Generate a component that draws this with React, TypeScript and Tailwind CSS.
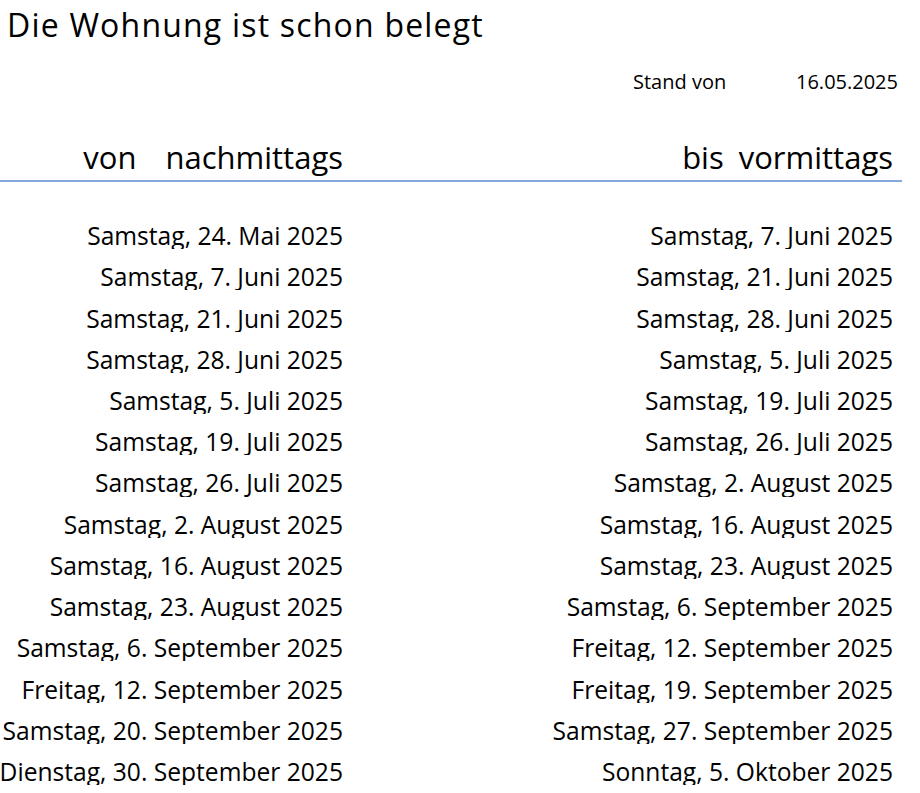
import React from "react";

const left = [
  "Samstag, 24. Mai 2025",
  "Samstag, 7. Juni 2025",
  "Samstag, 21. Juni 2025",
  "Samstag, 28. Juni 2025",
  "Samstag, 5. Juli 2025",
  "Samstag, 19. Juli 2025",
  "Samstag, 26. Juli 2025",
  "Samstag, 2. August 2025",
  "Samstag, 16. August 2025",
  "Samstag, 23. August 2025",
  "Samstag, 6. September 2025",
  "Freitag, 12. September 2025",
  "Samstag, 20. September 2025",
  "Dienstag, 30. September 2025",
];

const right = [
  "Samstag, 7. Juni 2025",
  "Samstag, 21. Juni 2025",
  "Samstag, 28. Juni 2025",
  "Samstag, 5. Juli 2025",
  "Samstag, 19. Juli 2025",
  "Samstag, 26. Juli 2025",
  "Samstag, 2. August 2025",
  "Samstag, 16. August 2025",
  "Samstag, 23. August 2025",
  "Samstag, 6. September 2025",
  "Freitag, 12. September 2025",
  "Freitag, 19. September 2025",
  "Samstag, 27. September 2025",
  "Sonntag, 5. Oktober 2025",
];

export default function App() {
  return (
    <div className="w-[920px] h-[793px] overflow-hidden bg-white text-black font-['Open_Sans',sans-serif]">
      <div className="pt-[9px] pl-[7px] text-[32px] leading-none tracking-[1.2px] whitespace-nowrap">
        Die Wohnung ist schon belegt
      </div>

      <div className="mt-[31px] flex pl-[633px] w-[898px] justify-between text-[20px] leading-none whitespace-nowrap">
        <span>Stand von</span>
        <span>16.05.2025</span>
      </div>

      <div className="mt-[50px] w-[902px] pr-[9px] pb-[7px] border-b-2 border-[#84a7de] grid grid-cols-[343px_1fr] text-[31px] leading-none whitespace-nowrap">
        <div className="flex justify-end gap-[29px]">
          <span>von</span>
          <span>nachmittags</span>
        </div>
        <div className="flex justify-end gap-[15px]">
          <span>bis</span>
          <span>vormittags</span>
        </div>
      </div>

      <div className="mt-[26px] w-[893px] flex flex-col text-[24.6px] leading-none">
        {left.map((l, i) => (
          <div key={i} className="grid grid-cols-[343px_1fr] h-[41.23px]">
            <div className="flex items-end justify-end overflow-hidden whitespace-nowrap">
              <span className="pb-[0.5px]">{l}</span>
            </div>
            <div className="flex items-end justify-end overflow-hidden whitespace-nowrap">
              <span className="pb-[0.5px]">{right[i]}</span>
            </div>
          </div>
        ))}
      </div>
    </div>
  );
}
